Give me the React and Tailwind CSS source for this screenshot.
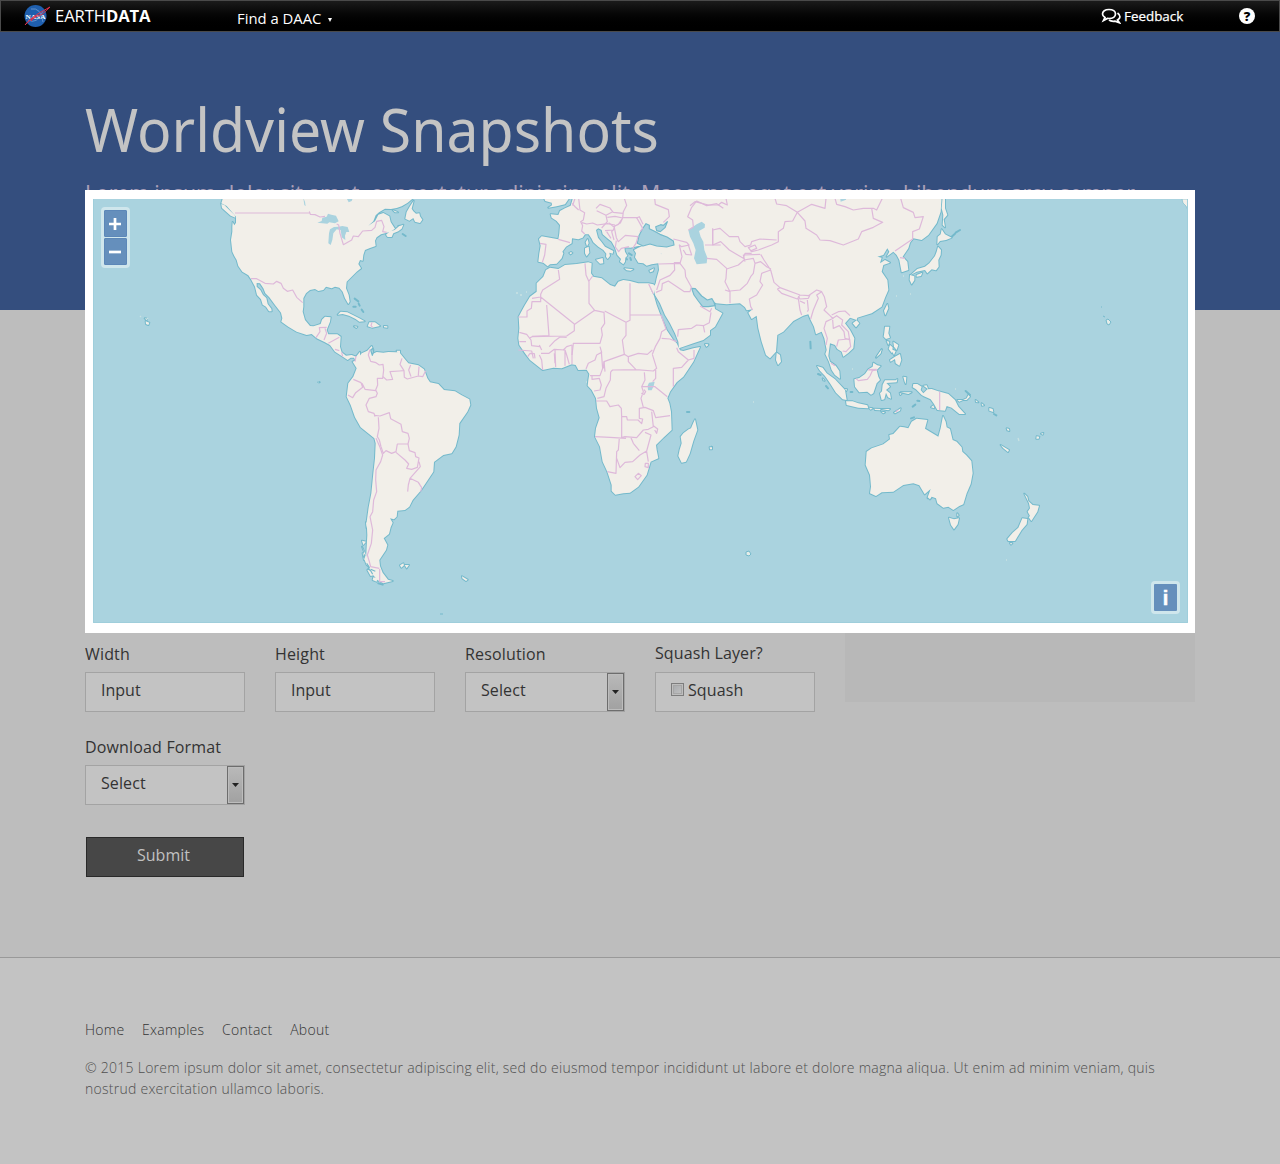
import React from "react";

// Each region is drawn on its own grid, three units to one map pixel.
const regions = [
  {
    at: "translate(80 190) scale(.333333)",
    land: [
      "M430 20L424 40L440 48L455 65L468 80L468 98L463 106L458 96L457 110L457 125L453 150L457 185L463 198L470 210L475 228L487 245L505 256L513 268L525 290L531 315L543 328L548 344L558 350L567 364L575 364L574 356L563 342L559 324L549 315L541 300L530 290L530 279L540 280L550 295L556 310L568 322L585 345L603 368L607 385L604 395L625 410L650 425L680 435L695 432L710 445L735 457L750 465L765 485L785 498L803 510L812 503L822 503L828 515L840 520L840 485L828 500L815 495L798 497L785 487L780 470L782 440L772 433L745 433L740 420L750 395L752 382L735 380L726 389L722 402L700 409L690 408L675 390L668 365L670 350L670 325L678 310L690 300L705 297L715 303L730 300L738 290L755 295L765 290L778 293L788 305L795 325L805 342L809 335L806 315L798 295L800 275L815 260L830 245L843 235L835 222L840 210L848 212L850 195L855 180L870 174L887 168L885 152L890 142L903 133L915 130L930 126L945 116L932 96L928 79L910 69L895 74L885 94L865 107L880 94L887 76L897 67L915 56L933 57L950 54L965 49L982 39L1005 20Z",
      "M918 134L930 124L944 120L957 109L970 104L965 116L955 124L940 130L935 141L923 141Z",
      "M424 42L433 45L448 60L464 75L466 83L452 77L436 63L426 54Z",
      "M773 374L782 365L802 367L820 376L838 385L854 394L838 395L827 387L807 377L788 372Z",
      "M868 397L885 397L900 408L883 412L876 413L863 409Z",
      "M912 408L922 409L922 413L912 412Z",
      "M822 409L832 410L829 414Z",
      "M197 394L208 398L205 405L198 402ZM194 385L201 386L200 391Z",
      "M824 326L835 334M836 341L839 347M845 359L850 366M820 350L827 350M715 577L719 577",
    ],
    lakes: [
      "M712 98L725 93L727 83L740 80L744 71L754 74L768 77L776 94L765 100L748 97L742 101Z",
      "M750 118L762 111L776 110L787 108L803 111L808 126L799 126L795 137L796 150L785 142L782 120L770 118L760 130L757 150L752 165L745 160L747 130Z",
      "M668 20L675 35L677 49L673 45L670 25ZM800 25L818 25L815 33L806 37Z",
    ],
    borders: [
      "M465 69L688 69M688 64L691 73L705 74L720 81L735 79M770 102L776 105L780 130L790 164L815 150L820 138L835 140L848 123L875 121L885 112L890 94L905 91L912 110L908 125L920 127",
      "M513 266L530 266L555 280L580 282L590 274L603 280L610 295L622 304L638 300L650 322L668 338",
      "M708 443L720 425L718 413L740 412M735 415L740 430L732 450M745 460L778 442M765 478L778 482M785 487L788 500M828 498L825 515M876 397L873 407L878 412",
    ],
  },
  {
    at: "translate(340 330) scale(.333333)",
    land: [
      "M38 95L50 90L65 70L82 62L95 48L100 60L97 72L110 66L130 68L145 66L168 67L178 67L190 82L205 100L235 106L252 118L262 145L270 157L295 162L312 180L345 184L365 196L388 208L391 225L382 245L358 280L356 315L347 350L335 370L310 375L282 396L280 425L262 452L242 482L218 510L208 530L195 540L172 542L170 560L162 568L150 565L158 578L152 592L147 612L131 625L142 645L138 660L118 690L120 708L128 728L144 749L158 753L130 760L112 750L92 726L78 690L80 650L82 615L80 575L86 532L94 490L100 430L105 385L107 340L103 325L62 292L45 262L32 225L20 200L25 160L40 140L50 115Z",
      "M180 706L190 700L192 706L184 713ZM194 705L207 705L200 715Z",
      "M366 739L383 749L378 753L367 745Z",
      "M170 62L180 62L180 69L172 68ZM66 632L78 635L70 645ZM78 577L82 578L80 595ZM66 650L72 665L70 680L80 705L95 712M68 670L77 675L72 690ZM82 720L98 715L105 734L92 738ZM100 742L112 745L110 755L98 750ZM115 760L128 764",
    ],
    lakes: ["M92 60L98 55L101 65L97 76Z", "M80 700L88 712L84 716L92 722L98 733M92 718L106 724"],
    borders: [
      "M90 58L85 75L92 94L108 98L118 105L129 103L131 120L128 145L112 145L113 165L107 180L112 190L108 200L88 205L78 225L85 245L102 250L105 260",
      "M24 195L38 203L47 188L68 172L63 158L40 148M66 160L75 178L108 182",
      "M129 140L140 150L158 148L150 125L178 123L190 122M186 85L180 103L192 122L193 142L202 147L235 138L248 140L257 122M212 105L206 120L213 140M237 110L235 136",
      "M103 256L120 258L148 248L152 266L183 283L187 305L204 310L208 325L204 342L172 342L168 365L155 370L138 362L130 370L123 350L118 330L112 320L117 295L115 262",
      "M204 342L208 362L225 368L227 380L237 384L232 412L215 418L200 415L206 402L195 390L168 367M237 395L241 410L210 445L205 465L203 485M210 445L235 457L245 473L242 485",
      "M108 325L120 352L128 375L122 395L108 420L107 450L110 485L101 510L98 545L90 560L98 600L94 640L82 675L88 695L92 710L118 715M119 717L119 755L135 755",
    ],
  },
  {
    at: "translate(510 195) scale(.333333)",
    land: [
      "M190 5L182 32L165 40L150 48L145 60L122 58L125 68L140 78L150 90L148 115L145 133L120 128L95 124L87 132L92 152L88 175L85 200L100 203L113 214L120 208L140 206L155 190L160 175L157 170L168 155L185 145L186 130L205 133L218 128L225 118L236 118L244 130L250 142L265 155L280 165L289 176L288 185L293 192L300 183L298 173L308 176L310 168L285 155L275 142L264 128L258 105L265 100L275 105L278 118L292 130L305 140L315 158L322 180L333 192L330 200L340 208L345 200L346 188L352 182L345 170L343 157L362 158L385 153L400 152L385 158L372 165L378 175L375 187L385 203L400 205L410 212L425 208L445 205L447 225L440 250L437 265L432 275L435 300L450 325L465 360L480 385L495 415L505 440L507 460L520 455L550 445L580 435L600 420L600 5Z",
      "M100 5L106 18L125 23L126 31L115 38L140 34L165 28L176 12L180 5Z",
      "M108 225L100 245L80 265L80 290L60 305L45 330L33 352L26 365L28 400L25 430L28 450L45 475L60 495L98 525L130 518L155 520L185 508L197 510L205 525L230 524L238 537L235 555L233 572L245 585L258 610L261 640L269 668L258 700L255 725L270 755L278 800L292 830L305 870L305 888L316 899L340 895L360 893L385 875L410 840L422 800L445 790L440 765L438 750L460 728L485 705L483 650L478 625L472 610L480 590L500 562L520 545L550 500L570 456L550 460L520 468L510 466L500 445L490 435L470 405L455 370L440 330L432 302L420 280L432 298L437 275L430 268L415 265L385 265L360 258L340 255L325 260L315 275L300 270L275 250L250 245L243 235L245 205L235 202L200 207L165 210L145 222L120 218Z",
      "M555 673L562 705L550 738L539 776L528 800L515 803L505 783L509 764L515 745L512 725L520 715L536 703L543 700L550 683Z",
      "M225 160L236 155L238 173L230 184L225 175ZM227 142L233 132L236 145L231 154Z",
      "M258 194L278 189L280 205L270 206ZM343 220L370 223L362 227L350 226ZM418 227L432 220L429 229L421 232Z",
      "M178 174L183 171L187 174L182 178ZM586 448L595 450L589 455ZM346 190L351 193M357 175L365 180M599 757L606 757L606 763L600 763ZM531 651L538 651M361 189L363 195",
    ],
    lakes: [
      "M382 145L387 122L397 102L408 86L418 91L418 101L432 108L450 118L471 126L490 138L492 150L470 156L440 153L420 147L399 153Z",
      "M437 95L452 89L460 91L472 80L465 98L451 110L440 107Z",
      "M545 280L556 281L575 303L592 315L606 311L612 322L615 332L595 335L578 335L565 318L552 300Z",
    ],
    water: [
      "M535 105L560 88L575 80L585 88L584 98L567 108L572 125L580 140L583 165L592 188L590 205L560 208L552 190L557 165L550 145L540 125Z",
      "M413 572L417 563L434 560L431 573L425 586L414 586Z",
      "M451 175L455 176L455 178Z",
    ],
    borders: [
      "M145 133L180 143M90 145L108 148L104 180L97 202M186 25L196 36L206 45M206 10L210 45L224 53L220 75L212 80L218 92L215 108L224 117M195 10L188 32M216 83L230 87L248 84L262 90L292 86L315 90",
      "M258 40L270 28L300 39L308 50L288 61L260 47M300 40L310 52L339 55M288 62L292 80L275 99M292 67L315 64L338 69L325 88L310 95L296 83M343 10L350 31L340 50L338 68L380 68L398 100L390 110M378 70L388 65L399 88M338 69L331 84L314 94L310 105L285 107M313 98L319 128L325 140L336 130L346 121L384 125L378 145L368 160M310 105L305 110L312 135M319 137L316 156L326 170L334 160L357 155M290 110L303 130M434 10L436 28L475 44L478 65L460 82",
      "M535 105L550 96L548 75L533 65L545 37L560 18L590 32L620 26L640 40M490 132L530 142L537 150L515 155L508 150L516 185L510 205L446 207M535 150L545 180L528 178L520 165M510 203L493 203L494 225L480 241L450 255L440 285M510 205L525 225L527 245L544 276L540 290L523 290L475 258L457 266L455 285L438 292M416 267L430 296",
      "M570 333L600 350L605 340M603 352L598 383L580 392L560 390L545 400L505 404L503 425M580 392L584 412",
      "M608 100L608 150L632 150",
      "M145 225L149 253L130 265L98 285L92 298L92 320L66 320L64 340L51 348L51 366L25 366M92 298L92 306L66 310M92 306L193 387L193 407L170 423L66 425L58 430M110 330L117 422L66 424M225 205L228 240L237 260L237 325L254 346L194 388M248 243L237 258M254 346L282 352L284 385L274 400L277 420L270 445L190 445L186 480M284 348L348 382L360 376L360 265M360 360L453 360M348 382L348 421L337 435L343 478",
      "M28 412L50 418L63 435L65 452L90 455M28 440L48 440M118 455L135 437L150 426L170 427M53 485L60 475L73 476L75 490M133 475L135 505M160 465L170 455L186 450",
      "M453 360L468 402L455 410L450 430L436 455L427 478M455 430L480 432L500 440M500 458L505 470L535 495L552 490L552 465M535 495L515 517L490 520L490 575M427 478L440 520L430 528L378 524M343 478L355 485L385 475L412 478L427 465M355 485L355 500L378 524L308 525L302 530M343 478L282 500L280 520",
      "M25 465L65 468L70 490M98 525L95 495L88 480M93 475L117 475L133 463L165 465L170 480L178 508M135 465L137 516M165 465L165 512M88 450L95 465M186 450L186 508M228 522L235 505L255 495L260 480L275 472L270 455M274 470L278 520L270 542L240 542M302 530L301 555L288 580L282 605L262 610M246 542L246 553L268 550L274 570L270 585L252 588M282 500L285 530",
      "M258 618L290 618L300 635L325 630L334 640L335 665L350 665L352 675L384 675L395 686L398 672L388 670L388 640L405 637L430 647L437 668L480 662M403 532L405 555L395 575L400 590L393 610L400 637M395 575L435 575L472 605M437 525L437 550L428 560M402 584L407 590L402 598L394 595",
      "M335 665L335 728L345 725L380 728L400 705L415 703L430 695L425 650M430 692L443 702L440 715L434 705M255 725L300 727L348 730M328 729L325 765L320 770L318 835L292 830M320 790L330 818L345 802L368 800L390 780L410 768L423 720L405 712M363 728L370 745L388 767M410 770L415 800M406 805L415 805L415 818L405 815ZM375 845L385 835L394 842L383 854Z",
    ],
  },
  {
    at: "translate(690 195) scale(.333333)",
    land: [
      "M-10 443L40 420L75 395L97 355L75 342L72 320L78 325L110 328L150 325L165 337L170 346L188 343L175 353L185 372L200 362L205 400L215 440L228 480L240 490L258 470L262 420L280 410L310 378L340 362L355 358L362 375L372 395L378 418L395 410L403 430L410 465L406 477L417 500L425 525L435 540L450 551L448 528L437 512L420 500L415 483L420 445L435 450L442 462L455 470L460 485L475 474L490 460L493 430L480 405L465 385L480 368L500 375L502 368L545 355L575 335L585 308L595 285L592 255L575 230L580 210L600 203L585 195L570 205L575 188L562 185L580 180L592 160L598 170L590 185L610 170L620 180L628 195L635 232L655 225L652 200L638 185L648 170L655 160L660 143L670 130L695 135L715 120L740 85L752 50L755 5L-10 5Z",
      "M260 473L270 480L273 500L264 510L258 495Z",
      "M758 5L755 40L760 60L758 90L765 97L761 73L772 60L765 40L765 5Z",
      "M755 103L765 118L785 128L768 135L750 138L742 148L743 125L752 118Z",
      "M744 155L753 165L752 180L745 195L746 215L738 226L725 223L712 235L705 225L680 230L662 240L682 222L705 215L718 205L735 183L740 170Z",
      "M660 240L673 244L673 256L665 268L659 255ZM680 240L697 233L693 243L680 245Z",
      "M592 327L595 340L586 361L582 347ZM488 385L500 376L508 385L498 397Z",
      "M585 395L598 395L595 415L600 428L588 432L581 425L583 412ZM600 450L608 457L606 475L596 462ZM590 438L598 440L595 450ZM610 440L625 450L620 465L612 455ZM558 488L575 463L572 475ZM602 462L617 468L612 480ZM600 495L615 485L630 477L634 495L628 512L617 505L615 492L602 500Z",
      "M361 440L362 460M45 448L55 448L50 454ZM785 125L795 116M797 113L810 105",
    ],
    water: ["M450 5L470 5L468 14L452 20Z", "M596 5L599 5L599 8Z"],
    borders: [
      "M0 32L15 20L55 30L85 30L95 22L112 30L108 10M255 10L260 27L290 32L322 52L365 28L405 40L408 10M435 10L440 28L465 35L490 45L520 40L550 40L560 45L577 10M322 52L345 78L348 100L380 120L390 135L420 137L460 150L505 132L515 110L550 97L578 82L550 70L545 40M632 10L640 38L670 52L675 68L700 65L688 102L668 110L668 132L615 168M630 188L645 190",
      "M322 52L308 78L285 80L280 100L265 110L265 140L245 150L205 165L185 170L175 158L195 150L200 160L180 168M68 150L68 105L90 100L118 125L145 125L150 140L165 155L182 150L185 140L210 132L260 135M68 150L92 140L118 165L160 190L165 175L185 175M45 150L68 150M50 190L80 193L110 220L108 250L105 260L120 290L105 285M110 222L145 210L162 195L190 190L195 205L212 200L230 215L243 222M212 178L222 195L242 225M195 205L190 235L182 245L172 265L150 285L120 288L120 325M165 200L160 180L210 178",
      "M242 225L215 235L210 260L218 270L200 300L178 312L182 335L188 345M242 225L252 262L270 278L330 300L355 302L380 285L395 290L403 305L410 335L402 345L420 362L430 372M262 282L270 278M262 282L275 295L322 312L330 300M325 303L330 312L355 310L360 300M325 310L330 345L335 360M345 325L330 318M352 315L355 345L352 350M362 372L370 345L385 310L380 300L395 290M425 360L445 350L465 348L480 362M425 372L408 380L402 400L412 430L408 450M425 372L440 362L458 375L455 390L475 410L482 455L468 470L458 468M428 375L430 400L448 392L462 410L465 430L480 435L475 432L445 435L440 455M423 505L435 512M535 524L560 523",
    ],
  },
  {
    at: "translate(800 340) scale(.333333)",
    land: [
      "M51 78L68 83L80 100L105 118L135 150L140 180L128 178L108 158L90 130L75 108L60 92Z",
      "M138 184L158 184L175 190L202 196L205 205L175 203L140 195Z",
      "M163 118L178 114L195 102L205 88L218 80L220 68L232 76L242 78L230 90L235 110L240 120L230 130L220 160L213 164L202 155L178 157L165 140Z",
      "M248 134L255 121L287 121L292 117L290 127L259 129L270 140L258 150L270 160L273 176L264 172L258 158L253 178L245 180L240 160L246 154Z",
      "M340 132L352 132L365 140L362 150L370 160L382 148L395 147L415 154L445 162L465 180L475 200L495 222L478 222L455 203L440 198L435 212L412 210L402 192L392 178L370 168L365 165L348 148L338 142Z",
      "M472 180L500 180L510 170L505 165L500 175L478 185ZM497 153L510 165M527 180L535 187L528 186ZM545 190L552 196L546 197ZM568 204L578 207L580 216L568 212ZM582 222L589 226M620 265L627 267L628 273L622 271ZM602 315L627 330L624 336L610 325ZM710 289L718 290L716 296L709 296ZM723 281L730 279L728 284Z",
      "M302 157L335 157L325 162ZM310 110L319 112L317 132L314 125ZM299 159L305 161L301 165ZM282 218L302 205L300 212L285 220ZM207 203L218 205L212 209ZM223 206L242 207L240 211L225 210ZM245 207L270 207L265 211ZM244 215L255 217L250 220ZM338 200L346 194M352 182L358 183M393 202L400 196L403 205ZM370 137L380 136L385 148ZM135 147L141 148L139 153ZM152 156L157 156M54 102L62 105M68 115L74 122L70 121ZM78 138L84 145M230 50L245 28L240 42Z",
      "M429 228L437 245L440 262L450 267L458 300L470 305L485 322L487 335L498 345L514 363L518 400L512 432L500 460L490 493L478 498L460 510L445 500L430 503L412 490L408 475L395 470L390 478L383 472L392 447L374 463L358 436L340 430L310 435L280 455L245 457L228 468L210 460L213 440L210 405L197 375L200 335L215 325L250 313L270 298L268 285L280 282L300 260L312 262L325 265L335 245L350 236L382 240L375 266L415 290L422 265Z",
      "M447 533L462 538L477 535L473 553L462 568L453 555ZM472 520L476 526L472 529Z",
      "M673 461L682 470L685 483L698 495L717 497L712 515L694 543L686 532L690 528L683 515L690 505L687 490Z",
      "M667 535L682 537L680 553L665 570L645 603L625 603L622 597L638 578L655 563ZM630 609L637 610L633 614Z",
      "M383 475L394 475M333 235L342 232",
    ],
    borders: [
      "M168 116L175 122L202 118L210 108L217 92L232 90M205 90L225 90M419 155L419 210M288 215L294 210",
    ],
  },
  {
    at: "translate(320 98) scale(.333333)",
    land: [
      "M281 308L270 325L260 342L256 362L268 368L280 360L285 371L300 375L307 365L300 355L298 346L288 347L280 340L275 332L278 320Z",
      "M218 336L234 343L225 343ZM248 408L257 414M235 384L241 383",
    ],
    borders: [],
  },
];

const islets = "M140 316l1 1M147 318l1 1M516 293h2M520 295h2M526 292h1M903 276h1M910 294h1M318 382h1M586 382h1M753 402h1M955 389h1M1018 438l1 3M1006 560h1M852 369h1M896 296h1";
const rings = "M746 552l3-1 2 3-2 2-3-1zM1106 320l2-1 3 3-2 3-2-1zM1103 316l2 1M711 446l2 1M440 614h3M1101 307h1M318 382h2";

function WorldMap() {
  return (
    <svg className="block h-[424px] w-[1095px]" viewBox="93 199 1095 424">
      <rect x="93" y="199" width="1095" height="424" fill="#aad3df" />
      <g fill="none" stroke="#74b9cb" strokeWidth="6" strokeLinejoin="round" strokeLinecap="round">
        {regions.map((r, i) => (
          <g key={i} transform={r.at}>{r.land.map((d, j) => <path key={j} d={d} />)}</g>
        ))}
      </g>
      <g fill="#f2efe9">
        {regions.map((r, i) => (
          <g key={i} transform={r.at}>{r.land.map((d, j) => <path key={j} d={d} />)}</g>
        ))}
      </g>
      <g fill="#aad3df" stroke="#74b9cb" strokeWidth="3.5" strokeLinejoin="round">
        {regions.map((r, i) => (
          <g key={i} transform={r.at}>
            {r === regions[0]
              ? (r.lakes || []).map((d, j) => <path key={j} d={d} stroke="none" />)
              : (r.lakes || []).map((d, j) => <path key={j} d={d} />)}
            {(r.water || []).map((d, j) => <path key={j} d={d} stroke="none" />)}
          </g>
        ))}
      </g>
      <g fill="none" stroke="#deb9da" strokeWidth="3.6" strokeLinejoin="round">
        {regions.map((r, i) => (
          <g key={i} transform={r.at}>{r.borders.map((d, j) => <path key={j} d={d} />)}</g>
        ))}
      </g>
      <path d={islets} stroke="#c9e2e3" strokeWidth="1.3" fill="none" />
      <path d={rings} stroke="#74b9cb" strokeWidth="1" fill="#e4ece8" />
      <path d="M1182 199h6v11l-2-4-3-3z" fill="#f2efe9" stroke="#74b9cb" strokeWidth=".6" />
      <path d="M93.5 199v423.5h1094V199" fill="none" stroke="#9fcedb" />
    </svg>
  );
}

function NasaLogo() {
  return (
    <svg className="h-[24px] w-[28px]" viewBox="0 0 28 24">
      <circle cx="12.500" cy="12" r="11" fill="#1f5fae" />
      <path d="M5 16Q14 21 20 7M8 5Q18 3 20 18" fill="none" stroke="#7fa8d8" strokeWidth=".7" />
      <text x="2.500" y="14.500" fontSize="7" fontWeight="700" fill="#fff" textLength="20" lengthAdjust="spacingAndGlyphs" fontFamily="Liberation Serif, serif">NASA</text>
      <path d="M2 21C8 13 18 8 27 3L19 10.500L13 12.500L8 17M14 12C9 14 6 17 2 21" fill="none" stroke="#e0304a" strokeWidth="1" />
    </svg>
  );
}

function TopBar() {
  return (
    <header className="flex h-[32px] items-center border border-[#4a4a4a] bg-gradient-to-b from-[#1b1b1b] to-black text-white">
      <div className="ml-[22px] flex items-center">
        <NasaLogo />
        <span className="ml-[4px] w-[100px] origin-left scale-x-[1.04] whitespace-nowrap text-[16px] leading-[20px] tracking-[-0.1px]">
          EARTH<b>DATA</b>
        </span>
      </div>
      <div className="mt-[5px] ml-[82px] flex items-center text-[14px] leading-[20px] font-medium">
        <span className="w-[85px] origin-left scale-x-[1.06] whitespace-nowrap">Find a DAAC</span>
        <svg className="mt-[3px] ml-[6px] h-[4px] w-[4px]" viewBox="0 0 4 4"><path d="M0 0h4L2 4z" fill="#fff" /></svg>
      </div>
      <div className="ml-auto flex items-center">
        <svg className="h-[16px] w-[20px]" viewBox="0 0 20 16" fill="none" stroke="#fff" strokeWidth="1.700">
          <path d="M8 1.500C12 1.500 14.500 3.500 14.500 6S12 10.500 8 10.500L6.500 10.400L2.500 12.500L4 9.500C2.500 8.500 1.500 7.500 1.500 6C1.500 3.500 4 1.500 8 1.500Z" />
          <path d="M16.500 5C20 7.500 19.500 10.500 16.500 12L18.500 14.800L14 13.200C11.500 13.500 9.500 13.200 8 12" />
        </svg>
        <span className="ml-[3px] w-[60px] origin-left scale-x-[1.03] whitespace-nowrap text-[13px] leading-[20px] font-medium [-webkit-text-stroke:0.25px_white]">Feedback</span>
        <span className="mr-[24px] ml-[55px] flex size-[16px] items-center justify-center rounded-full bg-white text-[13px] leading-none font-extrabold text-black">?</span>
      </div>
    </header>
  );
}

function Field({ label, children, raised }) {
  return (
    <div className="w-[160px]">
      <div className={raised ? "-mt-px h-[30px] tracking-[0.1px]" : "h-[29px] tracking-[0.16px]"}>{label}</div>
      <div className="flex h-[40px] border border-[#a3a3a3] bg-[#c3c3c3] pl-[15px] leading-[34px]">{children}</div>
    </div>
  );
}

function Select() {
  return (
    <>
      <span className="flex-1 tracking-[0.1px]">Select</span>
      <span className="flex h-[38px] w-[17px] items-center justify-center border border-[#6d6d6d] bg-gradient-to-b from-[#b9b9b9] to-[#a1a1a1] shadow-[inset_0_0_0_1px_#bdbdbd]">
        <svg className="h-[4px] w-[7px]" viewBox="0 0 7 4"><path d="M0 0h7L3.500 4z" fill="#222" /></svg>
      </span>
    </>
  );
}

export default function App() {
  return (
    <div className="h-[1164px] w-[1280px] overflow-hidden bg-[#bdbdbd] text-[16px] leading-[22px] text-[#333] [font-family:'Open_Sans',sans-serif]">
      <TopBar />
      <section className="h-[278px] bg-[#344e7e] px-[85px] pt-[56px] [font-family:'Noto_Sans',sans-serif]">
        <h1 className="h-[91px] w-[700px] origin-left scale-x-[0.937] whitespace-nowrap text-[61px] leading-[82px] text-[#c4c4c4]">Worldview Snapshots</h1>
        <p className="h-[20px] w-[1110px] origin-left scale-x-[0.961] whitespace-nowrap text-[22px] leading-[26px] text-[#aa9fb8]">
          Lorem ipsum dolor sit amet, consectetur adipiscing elit. Maecenas eget est varius, bibendum arcu semper
        </p>
      </section>
      <main className="relative -mt-[120px] h-[767px] px-[85px]">
        <div className="relative h-[443px] bg-white pt-[9px] pl-[8px]">
          <WorldMap />
          <div className="absolute top-[17px] left-[16px] flex w-[29px] flex-col gap-px rounded-[4px] bg-[#cfe6ec] p-[3px]">
            {["M5 12h12M11 6v12", "M5 12h12"].map((d) => (
              <button key={d} className="flex h-[27px] w-[23px] items-center justify-center rounded-[1px] border border-[#5c87b8] bg-[#658fbc]">
                <svg className="h-[24px] w-[24px] shrink-0" viewBox="0 0 24 24"><path d={d} stroke="#fff" strokeWidth="2.700" /></svg>
              </button>
            ))}
          </div>
          <button className="absolute top-[391px] left-[1066px] flex h-[33px] w-[29px] items-center justify-center rounded-[4px] border-[3px] border-[#cfe6ec] bg-[#658fbc] text-[20px] leading-none font-bold text-white [-webkit-text-stroke:0.5px_white] [font-family:'Liberation_Sans',sans-serif]">i</button>
        </div>
        <div className="flex justify-between">
          <form className="w-[730px] pt-[10px]">
            <div className="flex gap-[30px]">
              <Field label="Width">Input</Field>
              <Field label="Height">Input</Field>
              <Field label="Resolution"><Select /></Field>
              <Field label="Squash Layer?" raised>
                <span className="mt-[10px] mr-[4px] size-[13px] border border-[#7d7d7d] bg-gradient-to-br from-[#a4a7aa] to-[#c4c4c4] shadow-[inset_0_0_0_1px_#bebebe,inset_0_0_0_2px_#a6a6a6]" />
                <span className="tracking-[0.1px]">Squash</span>
              </Field>
            </div>
            <div className="mt-[24px]"><Field label="Download Format"><Select /></Field></div>
            <button type="button" className="mt-[32px] ml-px block h-[40px] w-[158px] border border-[#292929] bg-[#474747] pr-[3px] pb-[4px] text-[#c1c1c1]">Submit</button>
          </form>
          <aside className="h-[69px] w-[350px] bg-[#b8b8b8]" />
        </div>
      </main>
      <footer className="h-[207px] border-t border-[#999] bg-[#c3c3c3] px-[85px] pt-[61px] text-[14px] leading-[21px] font-light tracking-[0.26px]">
        <nav className="flex gap-[17.7px] text-[#333]">
          <span>Home</span><span>Examples</span><span>Contact</span><span>About</span>
        </nav>
        <p className="mt-[17px] w-[1090px] text-[#505050]">© 2015 Lorem ipsum dolor sit amet, consectetur adipiscing elit, sed do eiusmod tempor incididunt ut labore et dolore magna aliqua. Ut enim ad minim veniam, quis nostrud exercitation ullamco laboris.</p>
      </footer>
    </div>
  );
}
